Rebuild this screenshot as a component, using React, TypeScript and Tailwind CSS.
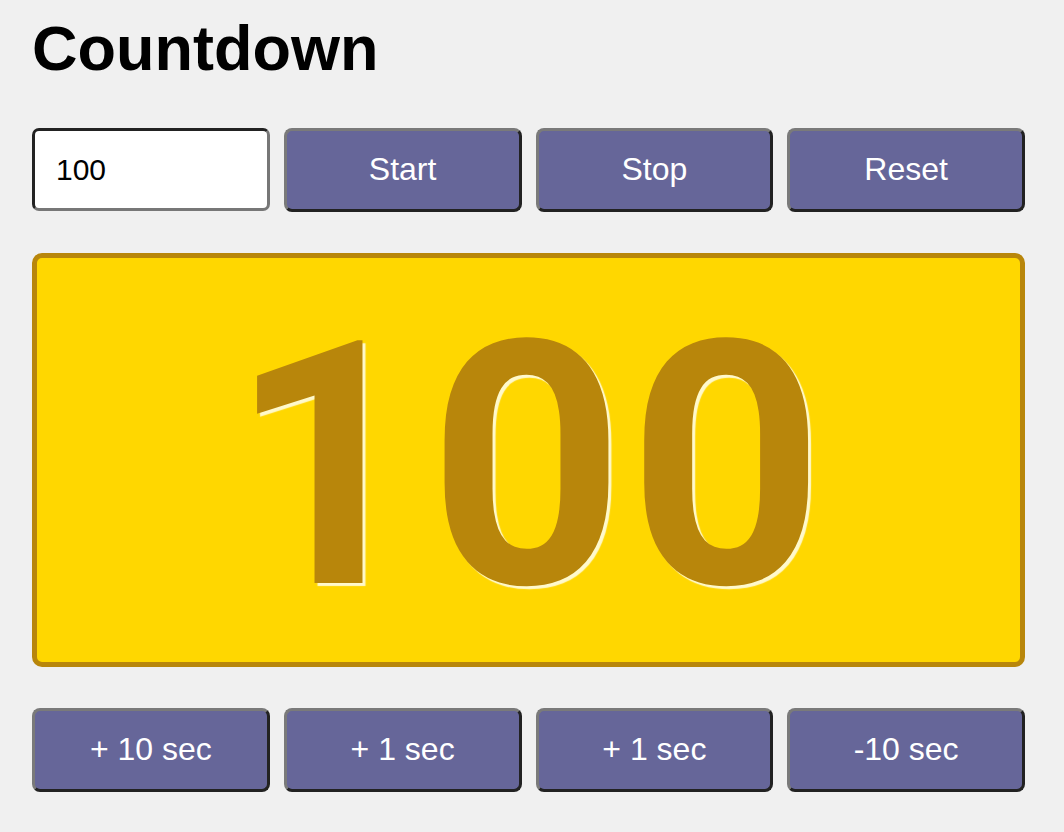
import React, { useState } from "react";

const btn =
  "h-[84px] rounded-[8px] bg-[#666699] text-white text-[32px] leading-none pb-[3px] border-[3px] border-t-[#7a7a7a] border-l-[#7a7a7a] border-r-[#222] border-b-[#222] flex items-center justify-center";

export default function App() {
  const [value, setValue] = useState("100");
  const [count, setCount] = useState(100);
  return (
    <div
      className="min-h-[832px] w-full bg-[#f0f0f0] pl-[32px] pr-[39px] pt-[12px]"
      style={{ fontFamily: '"Liberation Sans", Arial, sans-serif' }}
    >
      <h1 className="text-[63px] font-bold leading-none text-black h-[64px] flex items-center mt-[4px]">
        Countdown
      </h1>
      <div className="grid grid-cols-4 gap-x-[14px] mt-[48px]">
        <input
          value={value}
          onChange={(e) => setValue(e.target.value)}
          className="h-[83px] rounded-[7px] bg-white border-[3px] border-t-[#222] border-l-[#222] border-r-[#777] border-b-[#777] px-[21px] text-[30px] text-black outline-none"
        />
        <button className={btn} onClick={() => {}}>Start</button>
        <button className={btn}>Stop</button>
        <button className={btn} onClick={() => setCount(Number(value) || 0)}>Reset</button>
      </div>
      <div className="mt-[41px] h-[414px] rounded-[10px] border-[5px] border-[#b8860b] bg-[#ffd700] flex items-center justify-center">
        <span
          className="text-[341px] font-bold leading-none text-[#b8860b] tracking-[4px] pt-[12px]"
          style={{
            fontFamily: 'Roboto, "Liberation Sans", sans-serif',
            textShadow: "3px 3px 1px rgba(255,255,240,0.85)",
          }}
        >
          {count}
        </span>
      </div>
      <div className="grid grid-cols-4 gap-x-[14px] mt-[41px]">
        <button className={btn} onClick={() => setCount(count + 10)}>+ 10 sec</button>
        <button className={btn} onClick={() => setCount(count + 1)}>+ 1 sec</button>
        <button className={btn} onClick={() => setCount(count + 1)}>+ 1 sec</button>
        <button className={btn} onClick={() => setCount(count - 10)}>-10 sec</button>
      </div>
    </div>
  );
}
